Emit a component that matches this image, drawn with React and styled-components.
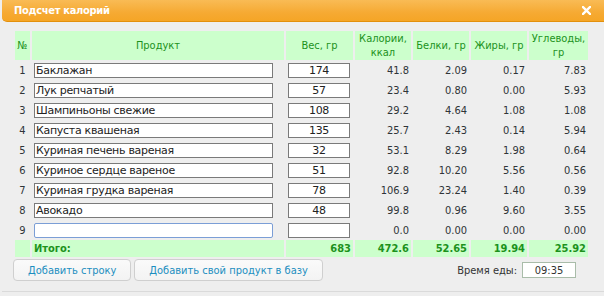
import React from "react";
import styled, { createGlobalStyle } from "styled-components";

const GlobalStyle = createGlobalStyle`
  body {
    margin: 0;
    background: #eeeeee;
    font-family: "DejaVu Sans Condensed", "DejaVu Sans", sans-serif;
    font-size: 11px;
    color: #333;
  }
`;

const Dialog = styled.div`
  width: 604px;
  height: 296px;
  display: flex;
  flex-direction: column;
  overflow: hidden;
`;

const TitleBar = styled.div`
  height: 21px;
  margin-left: 2px;
  padding: 0 13px 0 12px;
  display: flex;
  align-items: center;
  justify-content: space-between;
  background: linear-gradient(#f9bb55, #f6aa33 60%, #f5a526);
  border-bottom: 1px solid #e3900c;
  border-bottom-left-radius: 5px;
`;

const Title = styled.span`
  color: #fff;
  font-weight: bold;
  font-size: 11px;
  letter-spacing: -0.3px;
`;

const Content = styled.div`
  padding: 9px 0 0 13px;
`;

const Table = styled.table`
  border-collapse: separate;
  border-spacing: 2px 0;
  table-layout: fixed;
  width: 577px;
`;

const Th = styled.th`
  height: 29px;
  padding: 0;
  background: #ccffcc;
  color: #1c921c;
  font-weight: normal;
  font-size: 11px;
  line-height: 14px;
  text-align: center;
  vertical-align: middle;
`;

const Td = styled.td`
  height: 20px;
  padding: 0 ${(p) => (p.$num ? "2px" : "0")} 0 0;
  text-align: ${(p) => (p.$align || "left")};
  vertical-align: middle;
  white-space: nowrap;
  color: #2f3438;
`;

const TotalTd = styled.td`
  height: 17px;
  padding: 0 ${(p) => (p.$num ? "2px" : "0")} 0 ${(p) => (p.$label ? "2px" : "0")};
  background: #ccffcc;
  color: #1c921c;
  font-weight: bold;
  text-align: ${(p) => (p.$num ? "right" : "left")};
  vertical-align: middle;
`;

const Field = styled.input`
  box-sizing: border-box;
  display: block;
  margin-left: 2px;
  width: ${(p) => p.$w}px;
  height: 15px;
  padding: 0 1px;
  border: 1px solid ${(p) => (p.$focused ? "#7b9ed6" : "#7a7a7a")};
  border-radius: ${(p) => (p.$focused ? "2px" : "0")};
  background: #fff;
  font-family: "DejaVu Sans", sans-serif;
  font-size: 11px;
  letter-spacing: -0.3px;
  color: #222;
  text-align: ${(p) => (p.$center ? "center" : "left")};
  outline: none;
`;

const Footer = styled.div`
  display: flex;
  align-items: center;
  gap: 3px;
  padding: 2px 28px 0 13px;
`;

const Button = styled.button`
  box-sizing: border-box;
  height: 22px;
  padding: 0 14px;
  border: 1px solid #cfcfcf;
  border-radius: 4px;
  background: linear-gradient(#fafafa, #f3f3f3);
  color: #1c8ec0;
  font-family: inherit;
  font-size: 11px;
  cursor: pointer;
`;

const TimeBox = styled.div`
  margin-left: auto;
  display: flex;
  align-items: center;
  gap: 5px;
  font-size: 11px;
  color: #333;
`;

const TimeInput = styled.input`
  box-sizing: border-box;
  width: 54px;
  height: 16px;
  border: 1px solid #a9bca9;
  background: #fff;
  font-family: inherit;
  font-size: 11px;
  color: #333;
  text-align: center;
  padding: 0;
`;

const BottomLine = styled.div`
  margin: 10px 0 0 2px;
  border-top: 1px solid #dadada;
`;

function CloseIcon() {
  return (
    <svg width="9" height="9" viewBox="0 0 9 9">
      <path d="M1 1L8 8M8 1L1 8" stroke="#fff" strokeWidth="2.4" strokeLinecap="square" />
    </svg>
  );
}

const rows = [
  ["Баклажан", "174", "41.8", "2.09", "0.17", "7.83"],
  ["Лук репчатый", "57", "23.4", "0.80", "0.00", "5.93"],
  ["Шампиньоны свежие", "108", "29.2", "4.64", "1.08", "1.08"],
  ["Капуста квашеная", "135", "25.7", "2.43", "0.14", "5.94"],
  ["Куриная печень вареная", "32", "53.1", "8.29", "1.98", "0.64"],
  ["Куриное сердце вареное", "51", "92.8", "10.20", "5.56", "0.56"],
  ["Куриная грудка вареная", "78", "106.9", "23.24", "1.40", "0.39"],
  ["Авокадо", "48", "99.8", "0.96", "9.60", "3.55"],
  ["", "", "0.0", "0.00", "0.00", "0.00"],
];

export default function App() {
  return (
    <Dialog>
      <GlobalStyle />
      <TitleBar>
        <Title>Подсчет калорий</Title>
        <CloseIcon />
      </TitleBar>
      <Content>
        <Table>
          <colgroup>
            <col style={{ width: 15 }} />
            <col style={{ width: 252 }} />
            <col style={{ width: 67 }} />
            <col style={{ width: 56 }} />
            <col style={{ width: 56 }} />
            <col style={{ width: 56 }} />
            <col style={{ width: 59 }} />
          </colgroup>
          <thead>
            <tr>
              <Th>№</Th>
              <Th>Продукт</Th>
              <Th>Вес, гр</Th>
              <Th>Калории,<br />ккал</Th>
              <Th>Белки, гр</Th>
              <Th>Жиры, гр</Th>
              <Th>Углеводы,<br />гр</Th>
            </tr>
          </thead>
          <tbody>
            {rows.map((r, i) => (
              <tr key={i}>
                <Td $align="center">{i + 1}</Td>
                <Td>
                  <Field $w={239} defaultValue={r[0]} $focused={i === rows.length - 1} />
                </Td>
                <Td>
                  <Field $w={62} $center defaultValue={r[1]} />
                </Td>
                <Td $num $align="right">{r[2]}</Td>
                <Td $num $align="right">{r[3]}</Td>
                <Td $num $align="right">{r[4]}</Td>
                <Td $num $align="right">{r[5]}</Td>
              </tr>
            ))}
            <tr>
              <TotalTd />
              <TotalTd $label>Итого:</TotalTd>
              <TotalTd $num>683</TotalTd>
              <TotalTd $num>472.6</TotalTd>
              <TotalTd $num>52.65</TotalTd>
              <TotalTd $num>19.94</TotalTd>
              <TotalTd $num>25.92</TotalTd>
            </tr>
          </tbody>
        </Table>
      </Content>
      <Footer>
        <Button>Добавить строку</Button>
        <Button>Добавить свой продукт в базу</Button>
        <TimeBox>
          Время еды:
          <TimeInput defaultValue="09:35" />
        </TimeBox>
      </Footer>
      <BottomLine />
    </Dialog>
  );
}
